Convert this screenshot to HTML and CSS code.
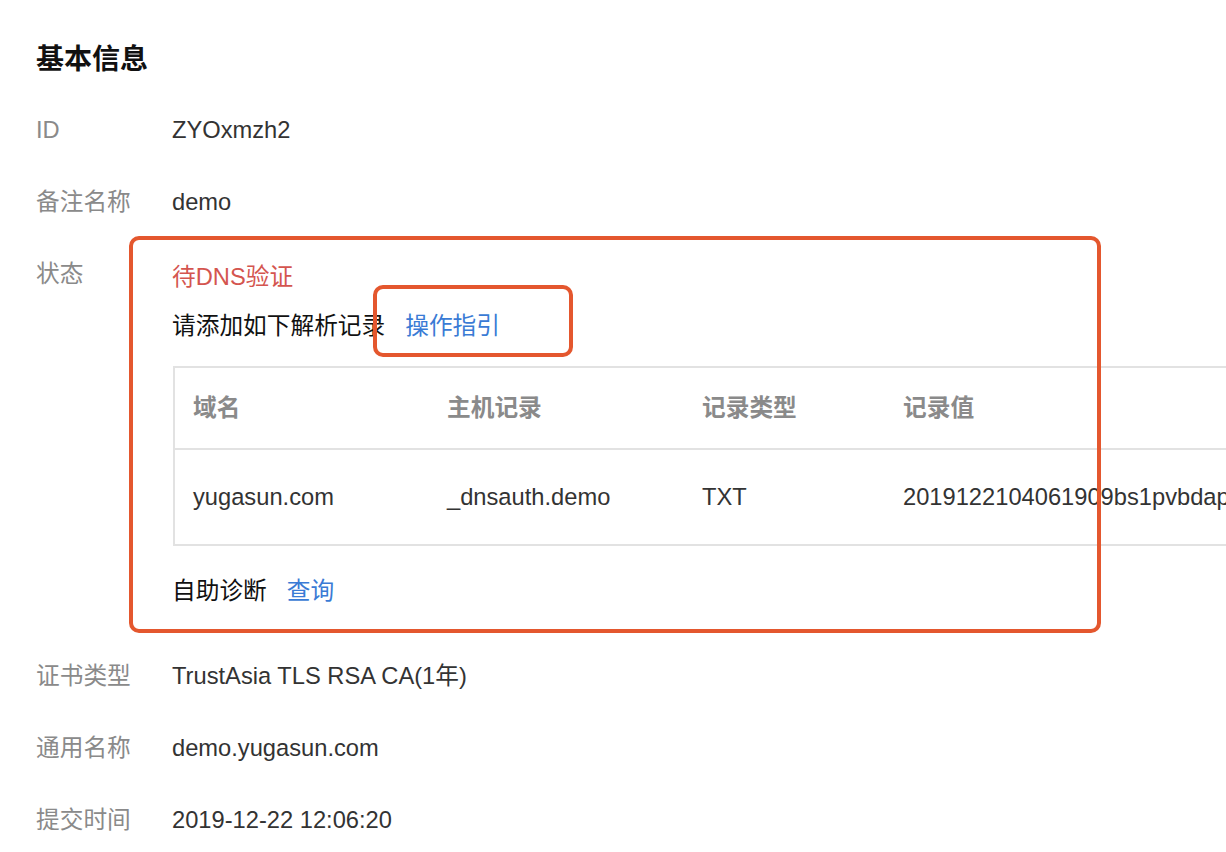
FILE: index.html
```html
<!DOCTYPE html>
<html lang="zh-CN">
<head>
<meta charset="utf-8">
<title>基本信息</title>
<link rel="stylesheet" href="styles.css">
</head>
<body>
<div class="page">
  <h2 class="title">基本信息</h2>
  <div class="info">
    <div class="row">
      <div class="label">ID</div>
      <div class="value">ZYOxmzh2</div>
    </div>
    <div class="row">
      <div class="label">备注名称</div>
      <div class="value">demo</div>
    </div>
    <div class="row row-status">
      <div class="label">状态</div>
      <div class="value status">
        <div class="status-line pending">待DNS验证</div>
        <div class="status-line hint">请添加如下解析记录<a class="link guide">操作指引</a></div>
        <div class="dns-table">
          <div class="tr th">
            <div class="td c1">域名</div>
            <div class="td c2">主机记录</div>
            <div class="td c3">记录类型</div>
            <div class="td c4">记录值</div>
          </div>
          <div class="tr">
            <div class="td c1">yugasun.com</div>
            <div class="td c2">_dnsauth.demo</div>
            <div class="td c3">TXT</div>
            <div class="td c4">2019122104061909bs1pvbdapyx3l6r9mqnt2k8dw</div>
          </div>
        </div>
        <div class="status-line diag">自助诊断<a class="link">查询</a></div>
      </div>
    </div>
    <div class="row">
      <div class="label">证书类型</div>
      <div class="value">TrustAsia TLS RSA CA(1年)</div>
    </div>
    <div class="row">
      <div class="label">通用名称</div>
      <div class="value">demo.yugasun.com</div>
    </div>
    <div class="row">
      <div class="label">提交时间</div>
      <div class="value">2019-12-22 12:06:20</div>
    </div>
  </div>
  <div class="mark mark-big"></div>
  <div class="mark mark-small"></div>
</div>
</body>
</html>
```
FILE: styles.css
```css
html, body {
  margin: 0;
  padding: 0;
  background: #fff;
  overflow: hidden;
}
body {
  width: 1226px;
  height: 852px;
  font-family: "Liberation Sans", "Noto Sans CJK SC", sans-serif;
  font-size: 23.7px;
  color: #333;
}
.page {
  position: relative;
  padding: 42px 0 0 36px;
}
.title {
  margin: 0 0 34px;
  font-size: 28px;
  line-height: 36px;
  font-weight: bold;
  color: #111;
}
.info {
  display: flex;
  flex-direction: column;
  gap: 36px;
}
.row {
  display: flex;
  line-height: 36px;
}
.label {
  width: 136px;
  flex: none;
  color: #8a8a8a;
}
.value {
  color: #333;
  white-space: nowrap;
}
.row-status {
  margin-bottom: 13px;
}
.status {
  display: flex;
  flex-direction: column;
}
.pending {
  color: #d4554f;
  margin-top: 3px;
}
.hint {
  margin-top: 13px;
  color: #111;
}
.link {
  color: #3a7bd5;
  margin-left: 20px;
}
.dns-table {
  margin-top: 22px;
  margin-left: 1px;
  width: 1200px;
  border: 2px solid #e2e2e2;
}
.tr {
  display: flex;
  height: 94px;
  align-items: center;
}
.tr.th {
  height: 80px;
  border-bottom: 2px solid #e2e2e2;
  color: #8a8a8a;
  font-weight: bold;
}
.td {
  padding-left: 18px;
  box-sizing: border-box;
  flex: none;
}
.c1 { width: 254px; }
.c2 { width: 255px; }
.c3 { width: 201px; }
.c4 { flex: 1; white-space: nowrap; }
.diag {
  margin-top: 27px;
  color: #111;
}
.mark {
  position: absolute;
  box-sizing: border-box;
  border: 4px solid #e4572e;
  border-radius: 10px;
}
.mark-big {
  left: 129px;
  top: 236px;
  width: 972px;
  height: 397px;
}
.mark-small {
  left: 373px;
  top: 285px;
  width: 200px;
  height: 72px;
}
```
